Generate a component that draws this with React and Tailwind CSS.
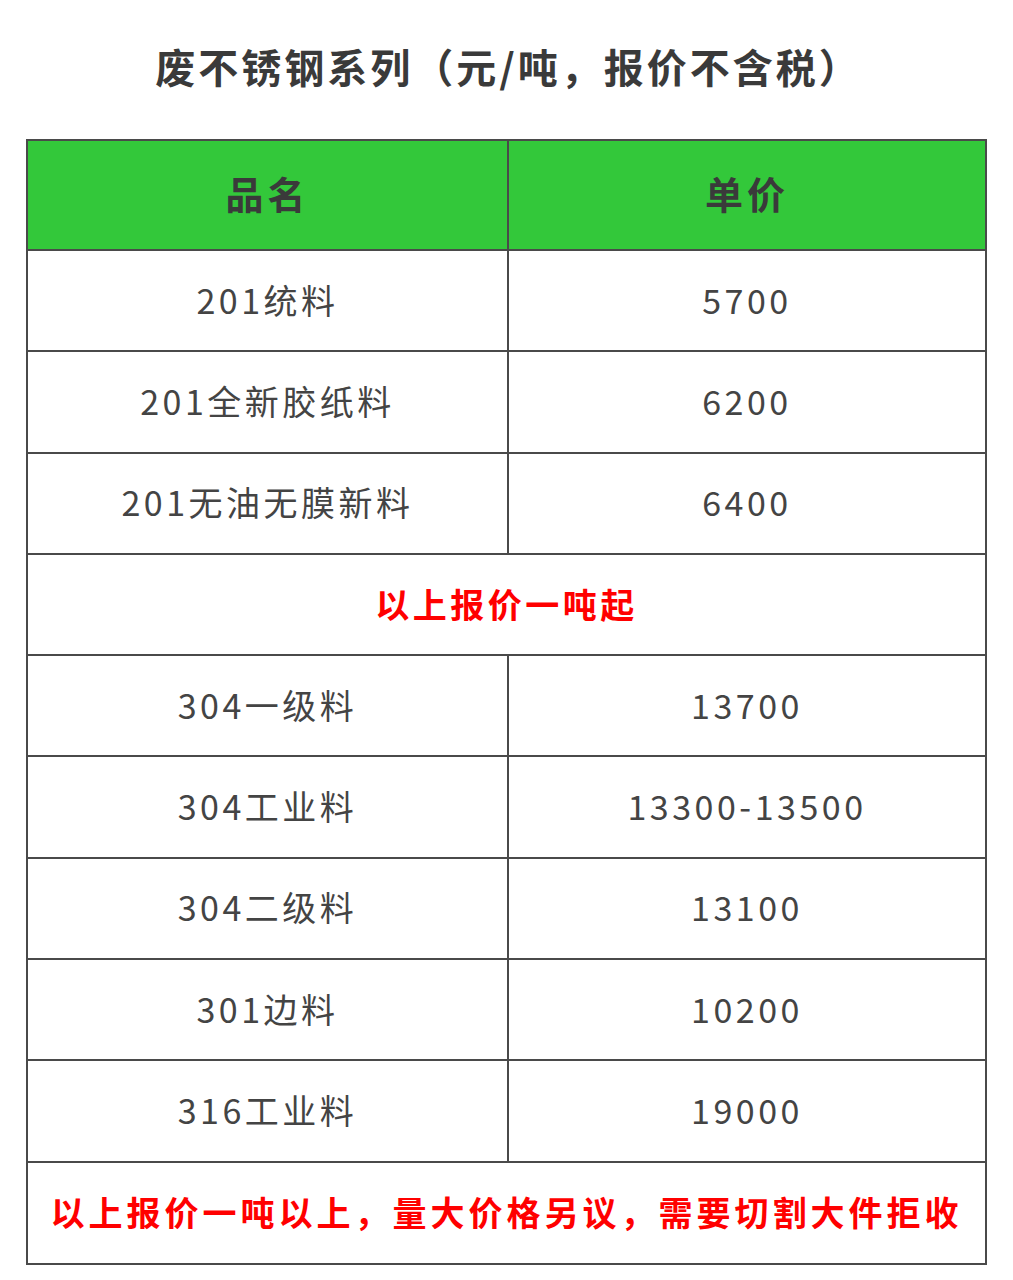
import React from "react";

const rows1 = [
  ["201统料", "5700"],
  ["201全新胶纸料", "6200"],
  ["201无油无膜新料", "6400"],
];
const rows2 = [
  ["304一级料", "13700"],
  ["304工业料", "13300-13500"],
  ["304二级料", "13100"],
  ["301边料", "10200"],
  ["316工业料", "19000"],
];

function Row({ a, b }) {
  return (
    <div className="grid grid-cols-[481px_1fr] h-[101.3px] border-b-2 border-[#4a4a4a]">
      <div className="flex items-center justify-center pb-[3px] border-r-2 border-[#4a4a4a] text-[34px] tracking-[3.5px] text-[#444]">
        {a}
      </div>
      <div className="flex items-center justify-center pb-[3px] text-[34px] tracking-[3.5px] text-[#444]">
        {b}
      </div>
    </div>
  );
}

export default function App() {
  return (
    <div
      className="w-[1013px] h-[1280px] bg-white"
      style={{ fontFamily: '"Noto Sans CJK SC", "Noto Sans", sans-serif' }}
    >
      <div className="h-[139px] flex items-center justify-center pb-[8px] pl-[4px]">
        <h1 className="text-[40px] font-bold tracking-[3px] text-[#3a3a3a] leading-none">
          废不锈钢系列（元/吨，报价不含税）
        </h1>
      </div>
      <div className="mx-[26px] w-[961px] border-2 border-b-0 border-[#4a4a4a]">
        <div className="grid grid-cols-[481px_1fr] h-[110px] bg-[#33c83a] border-b-2 border-[#4a4a4a]">
          <div className="flex items-center justify-center pb-[6px] border-r-2 border-[#4a4a4a] text-[38px] font-bold tracking-[4px] text-[#3a3a3a]">
            品名
          </div>
          <div className="flex items-center justify-center pb-[6px] text-[38px] font-bold tracking-[4px] text-[#3a3a3a]">
            单价
          </div>
        </div>
        {rows1.map((r) => (
          <Row key={r[0]} a={r[0]} b={r[1]} />
        ))}
        <div className="h-[101.3px] flex items-center justify-center pb-[3px] border-b-2 border-[#4a4a4a] text-[34px] font-bold tracking-[3.5px] text-[#ff0000]">
          以上报价一吨起
        </div>
        {rows2.map((r) => (
          <Row key={r[0]} a={r[0]} b={r[1]} />
        ))}
        <div className="h-[102px] flex items-center justify-center pb-[3px] border-b-2 border-[#4a4a4a] text-[34px] font-bold tracking-[4px] text-[#ff0000] whitespace-nowrap">
          以上报价一吨以上，量大价格另议，需要切割大件拒收
        </div>
      </div>
    </div>
  );
}
